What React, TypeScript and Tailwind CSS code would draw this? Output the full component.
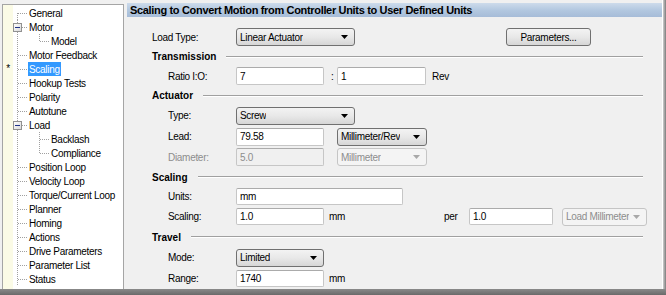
import React from 'react'

type Node = {
  label: string
  level?: 0 | 1
  first?: boolean
  expander?: boolean
  lastChild?: boolean
  selected?: boolean
}

const tree: Node[] = [
  { label: 'General', first: true },
  { label: 'Motor', expander: true },
  { label: 'Model', level: 1, lastChild: true },
  { label: 'Motor Feedback' },
  { label: 'Scaling', selected: true },
  { label: 'Hookup Tests' },
  { label: 'Polarity' },
  { label: 'Autotune' },
  { label: 'Load', expander: true },
  { label: 'Backlash', level: 1 },
  { label: 'Compliance', level: 1, lastChild: true },
  { label: 'Position Loop' },
  { label: 'Velocity Loop' },
  { label: 'Torque/Current Loop' },
  { label: 'Planner' },
  { label: 'Homing' },
  { label: 'Actions' },
  { label: 'Drive Parameters' },
  { label: 'Parameter List' },
  { label: 'Status' },
]

const dot = '#a0a0a0'

function Connector({ node }: { node: Node }) {
  const child = node.level === 1
  const w = child ? 37 : 15
  return (
    <svg width={w} height={14} shapeRendering="crispEdges" className="shrink-0">
      {node.expander ? (
        <>
          <line x1={4.5} y1={0} x2={4.5} y2={3} stroke={dot} strokeDasharray="1 1" />
          <line x1={4.5} y1={12} x2={4.5} y2={14} stroke={dot} strokeDasharray="1 1" />
          <line x1={9} y1={7.5} x2={15} y2={7.5} stroke={dot} strokeDasharray="1 1" />
          <defs>
            <linearGradient id="exp" x1="0" y1="0" x2="1" y2="1">
              <stop offset="0" stopColor="#ffffff" />
              <stop offset="1" stopColor="#d8d8d8" />
            </linearGradient>
          </defs>
          <rect x={0.5} y={3.5} width={8} height={8} fill="url(#exp)" stroke="#919191" />
          <line x1={2} y1={7.5} x2={7} y2={7.5} stroke="#1e3287" />
        </>
      ) : (
        <>
          <line
            x1={4.5}
            y1={node.first ? 7 : 0}
            x2={4.5}
            y2={14}
            stroke={dot}
            strokeDasharray="1 1"
          />
          {child ? (
            <>
              <line
                x1={26.5}
                y1={0}
                x2={26.5}
                y2={node.lastChild ? 8 : 14}
                stroke={dot}
                strokeDasharray="1 1"
              />
              <line x1={27} y1={7.5} x2={37} y2={7.5} stroke={dot} strokeDasharray="1 1" />
            </>
          ) : (
            <line x1={5} y1={7.5} x2={15} y2={7.5} stroke={dot} strokeDasharray="1 1" />
          )}
        </>
      )}
    </svg>
  )
}

function Arrow({ disabled = false }: { disabled?: boolean }) {
  return (
    <svg width="7" height="4" viewBox="0 0 7 4" className="shrink-0">
      <polygon points="0,0 7,0 3.5,4" fill={disabled ? '#a8a8a8' : '#000000'} />
    </svg>
  )
}

function Select({ value, width, disabled = false }: { value: string; width: string; disabled?: boolean }) {
  return (
    <div
      className={`${width} flex h-[18px] shrink-0 items-center justify-between rounded-[3px] border pl-[3px] pr-[6px] ${
        disabled
          ? 'border-[#c5c5c5] bg-[#f4f4f4] text-[#8d8d8d]'
          : 'border-[#707070] bg-gradient-to-b from-[#f3f3f3] via-[#e8e8e8] to-[#d6d6d6] text-black'
      }`}
    >
      <span className="truncate">{value}</span>
      <Arrow disabled={disabled} />
    </div>
  )
}

function Input({ value, width, disabled = false, h = 'h-[18px]' }: { value: string; width: string; disabled?: boolean; h?: string }) {
  return (
    <div
      className={`${width} ${h} flex shrink-0 items-center rounded-[2px] border border-[#c6c6c6] border-t-[#ababab] pl-[3px] ${
        disabled ? 'bg-[#f0f0f0] text-[#8d8d8d]' : 'bg-white text-black'
      }`}
    >
      {value}
    </div>
  )
}

function Heading({ title, h }: { title: string; h: string }) {
  return (
    <div className={`flex ${h} items-center pr-[4px]`}>
      <span className="text-[10px] font-bold tracking-normal">{title}</span>
      <div className="ml-[10px] h-0 flex-1 border-t border-b border-t-[#a0a0a0] border-b-white" />
    </div>
  )
}

function Field({ label, h, children, disabled = false }: { label: string; h: string; children: React.ReactNode; disabled?: boolean }) {
  return (
    <div className={`flex ${h} items-center`}>
      <span className={`w-[84px] shrink-0 pl-[16px] ${disabled ? 'text-[#8d8d8d]' : ''}`}>{label}</span>
      {children}
    </div>
  )
}

export default function App() {
  return (
    <div
      className="flex h-[295px] w-[666px] flex-col overflow-hidden bg-[#f0f0f0] text-[10px] tracking-[-0.3px] text-black"
      style={{ fontFamily: '"Liberation Sans", Arial, sans-serif' }}
    >
      <div className="flex h-[289px] items-start">
        {/* tree */}
        <div className="ml-[2px] mt-[4px] flex h-[285px] w-[122px] shrink-0 overflow-hidden border border-b-0 border-[#a5a5a5] bg-white">
          <div className="flex w-[10px] shrink-0 flex-col bg-[#fbfbe6] pt-[1px]">
            {tree.map((n, i) => (
              <div key={i} className="flex h-[14px] items-center justify-center text-[10px] leading-none">
                {n.selected ? '*' : ''}
              </div>
            ))}
          </div>
          <div className="flex flex-col pt-[1px]">
            {tree.map((n, i) => (
              <div key={i} className="flex h-[14px] items-center whitespace-nowrap">
                <Connector node={n} />
                <span
                  className={`flex h-[14px] items-center px-[1px] ${n.selected ? 'bg-[#3399ff] text-white' : ''}`}
                >
                  {n.label}
                </span>
              </div>
            ))}
          </div>
        </div>

        {/* right panel */}
        <div className="ml-[3px] mt-[3px] flex w-[535px] shrink-0 flex-col">
          <div className="flex h-[14px] items-center bg-gradient-to-b from-[#cddbeb] via-[#b3c8e0] to-[#a6bcd8] pl-[3px] text-[11px] font-bold tracking-[-0.33px]">
            Scaling to Convert Motion from Controller Units to User Defined Units
          </div>
          <div className="mt-[10px] flex flex-col pl-[25px] pr-[15px]">
            <div className="flex h-[20px] items-center">
              <span className="w-[84px] shrink-0">Load Type:</span>
              <Select value="Linear Actuator" width="w-[119px]" />
              <button className="ml-[151px] h-[18px] w-[85px] rounded-[3px] border border-[#707070] bg-gradient-to-b from-[#f3f3f3] via-[#e8e8e8] to-[#d6d6d6] text-[10px]">
                Parameters...
              </button>
            </div>
            <Heading title="Transmission" h="h-[19px]" />
            <Field label="Ratio I:O:" h="h-[20px]">
              <Input value="7" width="w-[88px]" />
              <span className="w-[13px] shrink-0 pl-[7px]">:</span>
              <Input value="1" width="w-[89px]" />
              <span className="ml-[6px]">Rev</span>
            </Field>
            <Heading title="Actuator" h="h-[19px]" />
            <Field label="Type:" h="h-[21px]">
              <Select value="Screw" width="w-[119px]" />
            </Field>
            <Field label="Lead:" h="h-[21px]">
              <Input value="79.58" width="w-[88px]" />
              <div className="ml-[13px]">
                <Select value="Millimeter/Rev" width="w-[90px]" />
              </div>
            </Field>
            <Field label="Diameter:" h="h-[20px]" disabled>
              <Input value="5.0" width="w-[88px]" disabled />
              <div className="ml-[13px]">
                <Select value="Millimeter" width="w-[90px]" disabled />
              </div>
            </Field>
            <Heading title="Scaling" h="h-[20px]" />
            <Field label="Units:" h="h-[19px]">
              <Input value="mm" width="w-[167px]" h="h-[17px]" />
            </Field>
            <Field label="Scaling:" h="h-[21px]">
              <Input value="1.0" width="w-[88px]" h="h-[17px]" />
              <span className="ml-[5px] w-[115px] shrink-0">mm</span>
              <span className="w-[25px] shrink-0">per</span>
              <Input value="1.0" width="w-[84px]" h="h-[17px]" />
              <div className="ml-[9px]">
                <Select value="Load Millimeter" width="w-[85px]" disabled />
              </div>
            </Field>
            <Heading title="Travel" h="h-[20px]" />
            <Field label="Mode:" h="h-[21px]">
              <Select value="Limited" width="w-[88px]" />
            </Field>
            <Field label="Range:" h="h-[21px]">
              <Input value="1740" width="w-[88px]" h="h-[17px]" />
              <span className="ml-[5px]">mm</span>
            </Field>
          </div>
        </div>
        <div className="h-full w-[1px] shrink-0 bg-white" />
        <div className="h-full w-[3px] shrink-0 bg-gradient-to-r from-[#cfcfcf] to-[#7c7c7c]" />
      </div>
      <div className="h-[6px] w-full bg-gradient-to-b from-[#8a8a8a] to-[#6a6a6a]" />
    </div>
  )
}
